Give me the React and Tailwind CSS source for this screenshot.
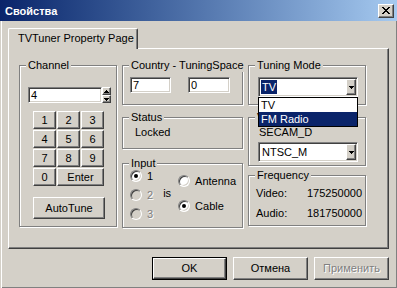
const raised = 'border border-t-white border-l-white border-r-[#404040] border-b-[#404040] shadow-[inset_-1px_-1px_#808080]'
const sunken = 'border border-t-[#808080] border-l-[#808080] border-r-white border-b-white shadow-[inset_1px_1px_#404040,inset_-1px_-1px_#d4d0c8]'
const disabledText = 'text-[#808080] [text-shadow:1px_1px_#fff]'

function Group({ title, className = '', children }) {
  return (
    <div className={`relative border border-[#808080] shadow-[inset_1px_1px_#fff,1px_1px_#fff] ${className}`}>
      <span className="absolute z-10 left-[6px] -top-[7px] bg-[#d4d0c8] px-[2px] leading-[13px] whitespace-nowrap">{title}</span>
      {children}
    </div>
  )
}

function Arrow({ up = false }) {
  return (
    <svg width="5" height="3" viewBox="0 0 5 3" shapeRendering="crispEdges" className={up ? 'rotate-180' : ''}>
      <rect x="0" y="0" width="5" height="1" fill="#000" />
      <rect x="1" y="1" width="3" height="1" fill="#000" />
      <rect x="2" y="2" width="1" height="1" fill="#000" />
    </svg>
  )
}

function Combo({ value, selected = false, className = '', children }) {
  return (
    <div className={`relative flex w-[100px] h-[20px] bg-white p-[1px] ${sunken} ${className}`}>
      <div className="flex-1 pl-[1px] pt-[1px]">
        <span className={`inline-block h-[14px] px-[1px] leading-[14px] ${selected ? 'bg-[#0a246a] text-white' : ''}`}>{value}</span>
      </div>
      <div className={`w-[10px] flex items-center justify-center bg-[#d4d0c8] ${raised}`}>
        <Arrow />
      </div>
      {children}
    </div>
  )
}

function Radio({ checked = false, disabled = false }) {
  return (
    <span className={`flex items-center justify-center w-[12px] h-[12px] rounded-full shrink-0 ${sunken} ${disabled ? 'bg-[#d4d0c8]' : 'bg-white'}`}>
      {checked && <span className={`w-[4px] h-[4px] rounded-full ${disabled ? 'bg-[#808080]' : 'bg-black'}`} />}
    </span>
  )
}

function Key({ label, className = '' }) {
  return (
    <div className={`flex items-center justify-center h-[18px] bg-[#d4d0c8] ${raised} ${className}`}>{label}</div>
  )
}

function Button({ label, isDefault = false, disabled = false }) {
  const inner = (
    <div className={`flex items-center justify-center w-full h-full ${raised} ${disabled ? disabledText : ''}`}>{label}</div>
  )
  return isDefault
    ? <div className="w-[75px] h-[23px] border border-black">{inner}</div>
    : <div className="w-[75px] h-[23px]">{inner}</div>
}

export default function App() {
  return (
    <div className="w-[397px] h-[288px] overflow-hidden bg-[#d4d0c8] text-[11px] leading-[13px] text-black font-['Liberation_Sans',Arial,sans-serif] shadow-[inset_1px_0_#d4d0c8,inset_2px_0_#fff,inset_-1px_-1px_#808080]">
      {/* title bar */}
      <div className="flex items-center h-[21px] bg-linear-to-r from-[#0a246a] to-[#a6caf0]">
        <span className="pl-[5px] pt-[1px] font-bold text-white">Свойства</span>
        <div className={`ml-auto mr-[3px] flex items-center justify-center w-[16px] h-[14px] bg-[#d4d0c8] ${raised}`}>
          <svg width="8" height="7" viewBox="0 0 8 7" shapeRendering="crispEdges">
            <path d="M0 0h2v1h-2zM6 0h2v1h-2zM1 1h2v1h-2zM5 1h2v1h-2zM2 2h4v1h-4zM3 3h2v1h-2zM2 4h4v1h-4zM1 5h2v1h-2zM5 5h2v1h-2zM0 6h2v1h-2zM6 6h2v1h-2z" fill="#000" />
          </svg>
        </div>
      </div>

      <div className="px-[8px] pt-[7px]">
        {/* tab */}
        <div className="relative z-10 w-[130px] h-[21px] -mb-[1px] bg-[#d4d0c8] border-t border-l border-t-white border-l-white border-r border-r-[#404040] rounded-tr-[2px] rounded-tl-[2px] shadow-[inset_-1px_0_#808080] pl-[9px] pt-[3px]">
          TVTuner Property Page
        </div>

        {/* tab page */}
        <div className="h-[201px] border border-t-white border-l-white border-r-[#404040] border-b-[#404040] shadow-[inset_-1px_-1px_#808080] pl-[10px] pt-[16px]">
          <div className="flex items-start">
            {/* channel */}
            <Group title="Channel" className="w-[98px] h-[162px]">
              <div className="flex ml-[8px] mt-[21px]">
                <div className={`w-[74px] h-[16px] bg-white pl-[2px] leading-[14px] ${sunken}`}>4</div>
                <div className="flex flex-col">
                  <div className={`w-[9px] h-[8px] flex items-center justify-center ${raised}`}><Arrow up /></div>
                  <div className={`w-[9px] h-[8px] flex items-center justify-center ${raised}`}><Arrow /></div>
                </div>
              </div>
              <div className="grid grid-cols-[23px_23px_23px] gap-[1px] ml-[13px] mt-[8px]">
                {['1', '2', '3', '4', '5', '6', '7', '8', '9', '0'].map((k) => <Key key={k} label={k} />)}
                <Key label="Enter" className="col-span-2" />
              </div>
              <div className={`ml-[13px] mt-[11px] w-[72px] h-[22px] flex items-center justify-center ${raised}`}>AutoTune</div>
            </Group>

            {/* middle column */}
            <div className="ml-[5px] flex flex-col">
              <Group title="Country - TuningSpace" className="w-[121px] h-[40px]">
                <div className="flex ml-[7px] mt-[11px]">
                  <div className={`w-[41px] h-[16px] bg-white pl-[2px] leading-[14px] ${sunken}`}>7</div>
                  <div className={`ml-[17px] w-[42px] h-[16px] bg-white pl-[2px] leading-[14px] ${sunken}`}>0</div>
                </div>
              </Group>

              <Group title="Status" className="mt-[12px] w-[121px] h-[32px]">
                <div className="ml-[12px] mt-[8px]">Locked</div>
              </Group>

              <Group title="Input" className="mt-[14px] w-[121px] h-[65px]">
                <div className="flex ml-[7px] mt-[6px]">
                  <div className="flex flex-col gap-[7px]">
                    <div className="flex items-center h-[12px]"><Radio checked /><span className="ml-[5px]">1</span></div>
                    <div className="flex items-center h-[12px]"><Radio disabled /><span className={`ml-[5px] ${disabledText}`}>2</span></div>
                    <div className="flex items-center h-[12px]"><Radio disabled /><span className={`ml-[5px] ${disabledText}`}>3</span></div>
                  </div>
                  <span className="ml-[10px] mt-[17px]">is</span>
                  <div className="ml-[7px] mt-[5px] flex flex-col gap-[13px]">
                    <div className="flex items-center h-[12px]"><Radio /><span className="ml-[5px]">Antenna</span></div>
                    <div className="flex items-center h-[12px]"><Radio checked /><span className="ml-[5px]">Cable</span></div>
                  </div>
                </div>
              </Group>
            </div>

            {/* right column */}
            <div className="ml-[5px] flex flex-col">
              <Group title="Tuning Mode" className="relative z-20 w-[118px] h-[40px]">
                <Combo value="TV" selected className="ml-[9px] mt-[11px]">
                  <div className="absolute left-[-1px] top-[19px] w-[100px] border border-black bg-white">
                    <div className="h-[14px] pl-[2px] leading-[14px]">TV</div>
                    <div className="h-[14px] pl-[2px] leading-[14px] bg-[#0a246a] text-white">FM Radio</div>
                  </div>
                </Combo>
              </Group>

              <Group title="Video Standard" className="mt-[12px] w-[118px] h-[49px]">
                <div className="ml-[10px] mt-[8px]">SECAM_D</div>
                <Combo value="NTSC_M" className="ml-[9px] mt-[3px]" />
              </Group>

              <Group title="Frequency" className="mt-[9px] w-[118px] h-[51px]">
                <div className="grid grid-cols-[51px_auto] gap-y-[7px] ml-[7px] mt-[11px]">
                  <span>Video:</span><span>175250000</span>
                  <span>Audio:</span><span>181750000</span>
                </div>
              </Group>
            </div>
          </div>
        </div>

        {/* dialog buttons */}
        <div className="flex justify-end gap-[6px] mt-[8px]">
          <Button label="OK" isDefault />
          <Button label="Отмена" />
          <Button label="Применить" disabled />
        </div>
      </div>
    </div>
  )
}
